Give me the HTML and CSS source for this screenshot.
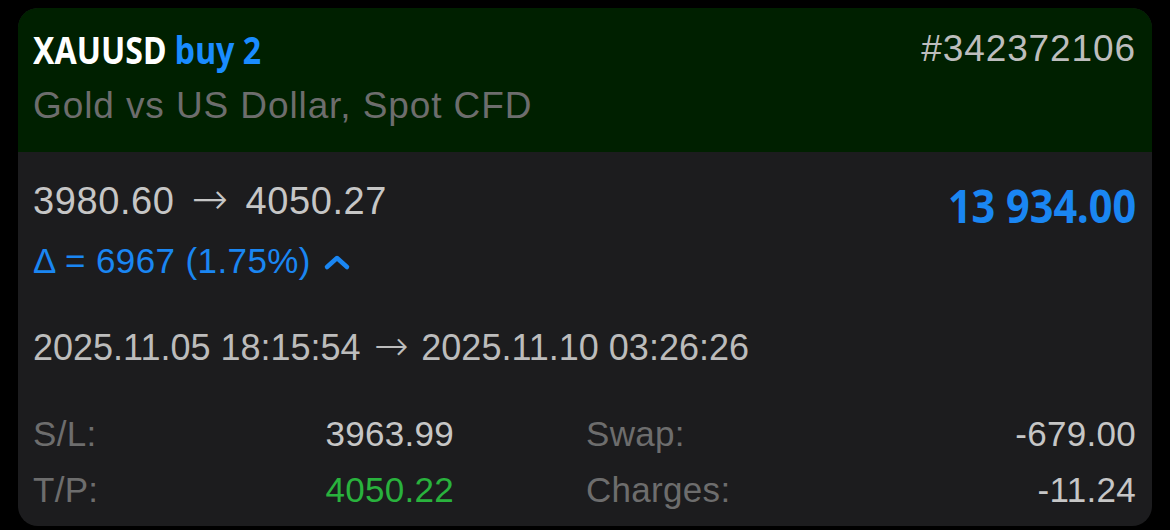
FILE: index.html
```html
<!DOCTYPE html>
<html lang="en">
<head>
    <meta charset="UTF-8">
    <meta name="viewport" content="width=device-width, initial-scale=1.0">
    <title>Position XAUUSD</title>
    <link rel="stylesheet" href="styles.css">
</head>
<body>
    <div class="card">
        <div class="card-head">
            <div class="head-row">
                <h1 class="symbol">XAUUSD <span class="side">buy 2</span></h1>
                <span class="ticket">#342372106</span>
            </div>
            <p class="description">Gold vs US Dollar, Spot CFD</p>
        </div>

        <div class="card-body">
            <div class="price-row">
                <div>
                    <p class="prices">3980.60 <span class="arrow">&rarr;</span> 4050.27</p>
                    <p class="delta">&Delta; = 6967 (1.75%)
                        <svg class="chevron" width="28" height="18" viewBox="0 0 28 18">
                            <path d="M4 14 L14 5 L24 14" fill="none" stroke="#1a86f2" stroke-width="4.5" stroke-linecap="round" stroke-linejoin="round"/>
                        </svg>
                    </p>
                </div>
                <span class="profit">13 934.00</span>
            </div>

            <p class="times">2025.11.05 18:15:54 <span class="arrow">&rarr;</span> 2025.11.10 03:26:26</p>

            <div class="stats">
                <span class="label">S/L:</span>
                <span class="value">3963.99</span>
                <span class="label">Swap:</span>
                <span class="value">-679.00</span>
                <span class="label">T/P:</span>
                <span class="value tp">4050.22</span>
                <span class="label">Charges:</span>
                <span class="value">-11.24</span>
            </div>
        </div>
    </div>
</body>
</html>
```

FILE: styles.css
```css
body {
    margin: 0;
    background-color: #000;
    font-family: 'Liberation Sans', Arial, Helvetica, sans-serif;
}
p {
    margin: 0;
}
.card {
    margin: 8px 18px 0 18px;
    height: 518px;
    border-radius: 20px;
    overflow: hidden;
    background-color: #1c1c1e;
}
.card-head {
    height: 144px;
    box-sizing: border-box;
    padding: 18px 16px 0 15px;
    background-color: #002000;
}
.head-row {
    display: flex;
    justify-content: space-between;
    align-items: baseline;
}
/* narrow bold face, squeezed since no condensed font is installed */
.symbol {
    display: inline-block;
    margin: 0;
    font-family: 'Noto Sans', 'Liberation Sans', sans-serif;
    font-size: 38px;
    line-height: 46px;
    font-weight: bold;
    color: #fff;
    transform: scaleX(0.845);
    transform-origin: left center;
}
.side {
    color: #1a8cff;
}
.ticket {
    font-size: 37px;
    letter-spacing: 0.9px;
    color: #bdbdbd;
    position: relative;
    top: -3px;
}
.description {
    margin-top: 12px;
    font-size: 37px;
    letter-spacing: 0.9px;
    line-height: 42px;
    color: #6d6d6d;
}
.card-body {
    padding: 26px 16px 0 15px;
}
.price-row {
    display: flex;
    justify-content: space-between;
    align-items: flex-start;
}
.prices {
    font-size: 38px;
    letter-spacing: 0.6px;
    line-height: 46px;
    color: #c6c6c6;
}
.arrow {
    margin: 0 4px;
    font-family: 'DejaVu Sans', sans-serif;
    font-weight: 200;
    font-size: 1.15em;
    line-height: 0;
    letter-spacing: 0;
}
.prices .arrow {
    margin: 0 6px;
}
.times .arrow {
    margin: 0 3px;
}
.delta {
    margin-top: 17px;
    font-size: 35px;
    letter-spacing: 0.4px;
    line-height: 40px;
    color: #1a86f2;
}
.chevron {
    margin-left: 2px;
    vertical-align: 2px;
}
.profit {
    display: inline-block;
    margin-top: 1px;
    font-family: 'Noto Sans', 'Liberation Sans', sans-serif;
    font-size: 46px;
    line-height: 52px;
    font-weight: bold;
    color: #1a86f2;
    transform: scaleX(0.9);
    transform-origin: right center;
}
.times {
    margin-top: 45px;
    font-size: 36px;
    line-height: 44px;
    color: #bcbcbc;
}
.stats {
    display: grid;
    grid-template-columns: 176px 245px 1fr auto;
    row-gap: 16px;
    margin-top: 44px;
    font-size: 35px;
    letter-spacing: 0.3px;
    line-height: 40px;
}
.stats .label {
    color: #6d6d6d;
}
.stats .label:nth-child(3),
.stats .label:nth-child(7) {
    padding-left: 132px;
}
.stats .value {
    text-align: right;
    color: #c6c6c6;
}
.stats .tp {
    color: #29b23d;
}
```
